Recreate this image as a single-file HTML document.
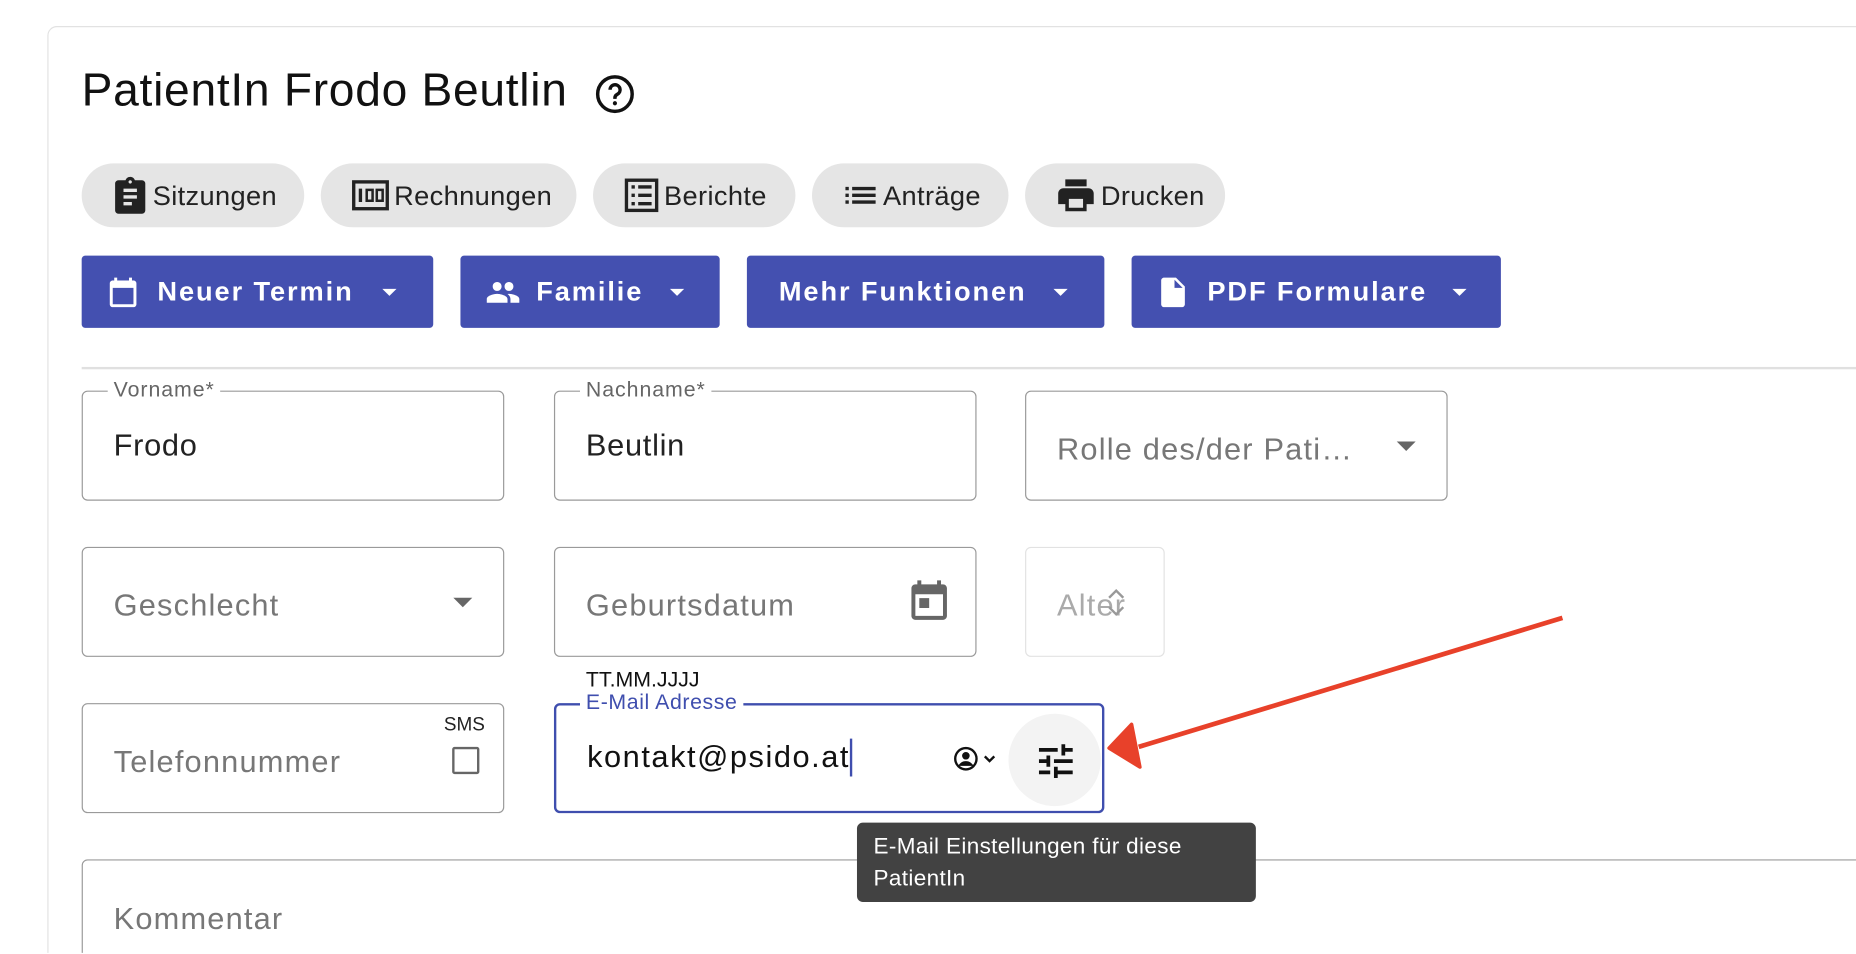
<!DOCTYPE html>
<html><head><meta charset="utf-8"><style>
html,body{margin:0;padding:0;background:#fff;width:1856px;height:954px;overflow:hidden;font-family:"Liberation Sans",Arial,sans-serif;}
#w{position:absolute;left:0;top:0;width:1568px;height:805px;overflow:hidden;transform:scale(1.18367);transform-origin:0 0;}
.a{position:absolute;}
.card{left:40px;top:22px;width:1600px;height:900px;border:1.5px solid #e2e2e2;border-radius:8px;}
.title{left:69px;top:55px;font-size:39px;color:#111;letter-spacing:0.6px;}
.chip{top:138px;height:54px;border-radius:27px;background:#e5e5e5;font-size:23px;color:#222;display:flex;align-items:center;box-sizing:border-box;padding-left:24px;letter-spacing:0.3px}
.chip svg{margin-right:2px}
.btn{top:216px;height:61px;background:#4450b0;border-radius:3px;color:#fff;font-weight:bold;font-size:23px;letter-spacing:1.6px;display:flex;align-items:center;box-sizing:border-box;}
.caret{width:0;height:0;border-left:6px solid transparent;border-right:6px solid transparent;border-top:6px solid #fff;position:absolute;}
.f{border:1.5px solid #9a9a9a;border-radius:5px;box-sizing:border-box;}
.lbl{position:absolute;top:-12px;background:#fff;padding:0 5px;font-size:18px;color:#666;letter-spacing:0.8px;}
.val{position:absolute;left:26px;font-size:26px;color:#222;letter-spacing:0.6px;white-space:nowrap}
.ph{position:absolute;left:26px;font-size:26px;color:#777;letter-spacing:1px;white-space:nowrap}
.gcaret{width:0;height:0;border-left:8px solid transparent;border-right:8px solid transparent;border-top:8px solid #666;position:absolute;}
</style></head><body><div id="w">
<div class="a card"></div>
<div class="a title">PatientIn Frodo Beutlin</div>
<svg class="a" style="left:502px;top:62px" width="35" height="35" viewBox="0 0 24 24"><circle cx="12" cy="12" r="10" fill="none" stroke="#111" stroke-width="2"/><path d="M9.2 9.5a2.9 2.9 0 1 1 4.2 2.6c-.9.5-1.4 1-1.4 2.1v.6" fill="none" stroke="#111" stroke-width="2"/><circle cx="12" cy="17.3" r="1.2" fill="#111"/></svg>

<div class="a chip" style="left:69px;width:188px"><svg width="34" height="34" viewBox="0 0 24 24"><path d="M19 3h-4.2C14.4 1.8 13.3 1 12 1s-2.4.8-2.8 2H5c-1.1 0-2 .9-2 2v16c0 1.1.9 2 2 2h14c1.1 0 2-.9 2-2V5c0-1.1-.9-2-2-2zm-7 0c.6 0 1 .4 1 1s-.4 1-1 1-1-.4-1-1 .4-1 1-1zM8 8h8v2H8zm0 4h8v2H8zm0 4h5v2H8z" fill="#222"/></svg>Sitzungen</div>
<div class="a chip" style="left:271px;width:216px"><svg width="36" height="34" viewBox="0 0 24 24"><rect x="2" y="4" width="20" height="16" fill="none" stroke="#222" stroke-width="2"/><path d="M5 8h2v8H5zM9 8h5v8H9zm1.5 1.5v5h2v-5zM15 8h5v8h-5zm1.5 1.5v5h2v-5z" fill="#222"/></svg>Rechnungen</div>
<div class="a chip" style="left:501px;width:171px"><svg width="34" height="34" viewBox="0 0 24 24"><rect x="3" y="3" width="18" height="18" fill="none" stroke="#222" stroke-width="2"/><path d="M6 6h2v2H6zm4 0h8v2h-8zM6 11h2v2H6zm4 0h8v2h-8zM6 16h2v2H6zm4 0h8v2h-8z" fill="#222"/></svg>Berichte</div>
<div class="a chip" style="left:686px;width:166px"><svg width="34" height="34" viewBox="0 0 24 24"><path d="M3 7h2v2H3zm4 0h14v2H7zM3 11h2v2H3zm4 0h14v2H7zM3 15h2v2H3zm4 0h14v2H7z" fill="#222"/></svg>Anträge</div>
<div class="a chip" style="left:866px;width:169px"><svg width="38" height="36" viewBox="0 0 24 24"><path d="M19 8H5c-1.7 0-3 1.3-3 3v6h4v4h12v-4h4v-6c0-1.7-1.3-3-3-3zm-3 11H8v-5h8v5zM18 3H6v4h12z" fill="#222"/></svg>Drucken</div>

<div class="a btn" style="left:69px;width:297px;padding-left:20px"><svg width="30" height="30" viewBox="0 0 24 24" style="margin-right:14px"><path d="M19 4h-1V2h-2v2H8V2H6v2H5c-1.1 0-2 .9-2 2v14c0 1.1.9 2 2 2h14c1.1 0 2-.9 2-2V6c0-1.1-.9-2-2-2zm0 16H5V9h14z" fill="#fff"/></svg>Neuer Termin<div class="caret" style="left:254px;top:28px"></div></div>
<div class="a btn" style="left:389px;width:219px;padding-left:20px"><svg width="32" height="30" viewBox="0 0 24 24" style="margin-right:12px"><path d="M16 11c1.7 0 3-1.3 3-3s-1.3-3-3-3-3 1.3-3 3 1.3 3 3 3zm-8 0c1.7 0 3-1.3 3-3S9.7 5 8 5 5 6.3 5 8s1.3 3 3 3zm0 2c-2.3 0-7 1.2-7 3.5V19h14v-2.5C15 14.2 10.3 13 8 13zm8 0c-.3 0-.6 0-1 .1 1.2.8 2 2 2 3.4V19h6v-2.5c0-2.3-4.700-3.5-7-3.5z" fill="#fff"/></svg>Familie<div class="caret" style="left:177px;top:28px"></div></div>
<div class="a btn" style="left:631px;width:302px;padding-left:27px">Mehr Funktionen<div class="caret" style="left:259px;top:28px"></div></div>
<div class="a btn" style="left:956px;width:312px;padding-left:20px"><svg width="30" height="30" viewBox="0 0 24 24" style="margin-right:14px"><path d="M14 2H6c-1.1 0-2 .9-2 2v16c0 1.1.9 2 2 2h12c1.1 0 2-.9 2-2V8zm-1 7V3.5L18.5 9z" fill="#fff"/></svg>PDF Formulare<div class="caret" style="left:271px;top:28px"></div></div>

<div class="a" style="left:69px;top:310px;width:1500px;height:1.5px;background:#e0e0e0"></div>

<div class="a f" style="left:69px;top:330px;width:357px;height:93px"><div class="lbl" style="left:21px">Vorname*</div><div class="val" style="top:30px">Frodo</div></div>
<div class="a f" style="left:468px;top:330px;width:357px;height:93px"><div class="lbl" style="left:21px">Nachname*</div><div class="val" style="top:30px">Beutlin</div></div>
<div class="a f" style="left:866px;top:330px;width:357px;height:93px"><div class="ph" style="top:33px">Rolle des/der Pati…</div><div class="gcaret" style="left:313px;top:42px"></div></div>

<div class="a f" style="left:69px;top:462px;width:357px;height:93px"><div class="ph" style="top:33px">Geschlecht</div><div class="gcaret" style="left:313px;top:42px"></div></div>
<div class="a f" style="left:468px;top:462px;width:357px;height:93px"><div class="ph" style="top:33px">Geburtsdatum</div><svg style="position:absolute;left:296px;top:24px" width="40" height="40" viewBox="0 0 24 24"><path d="M19 4h-1V2h-2v2H8V2H6v2H5c-1.1 0-2 .9-2 2v14c0 1.1.9 2 2 2h14c1.1 0 2-.9 2-2V6c0-1.1-.9-2-2-2zm0 16H5V9h14zM7 11h5v5H7z" fill="#666"/></svg></div>
<div class="a f" style="left:866px;top:462px;width:118px;height:93px;border-color:#e2e2e2"><div class="ph" style="top:33px;color:#aaa">Alter</div><svg style="position:absolute;left:64px;top:30px" width="24" height="32" viewBox="0 0 12 16"><path d="M3 6l3-3 3 3M3 10l3 3 3-3" fill="none" stroke="#999" stroke-width="1"/></svg></div>
<div class="a" style="left:495px;top:564px;font-size:18px;color:#111">TT.MM.JJJJ</div>

<div class="a f" style="left:69px;top:594px;width:357px;height:93px"><div class="ph" style="top:33px">Telefonnummer</div><div style="position:absolute;left:305px;top:9px;font-size:16px;color:#222">SMS</div><div style="position:absolute;left:312px;top:36px;width:19px;height:19px;border:2px solid #666;border-radius:2px"></div></div>
<div class="a" style="left:468px;top:594px;width:465px;height:93px;border:2.5px solid #3f4eae;border-radius:5px;box-sizing:border-box"><div class="lbl" style="left:20px;top:-13px;color:#3f4eae;letter-spacing:0.5px">E-Mail Adresse</div><div class="val" style="top:28px;color:#111;letter-spacing:1.3px">kontakt@psido.at</div><div style="position:absolute;left:248px;top:28px;width:2px;height:32px;background:#3f4eae"></div>
<svg style="position:absolute;left:334px;top:33px" width="42" height="24" viewBox="0 0 42 24"><circle cx="12" cy="12" r="9" fill="none" stroke="#111" stroke-width="2"/><circle cx="12" cy="9.5" r="3.2" fill="#111"/><path d="M5.5 18c2-3 4-4 6.5-4s4.5 1 6.5 4" fill="#111"/><path d="M28 10l4 4 4-4" fill="none" stroke="#111" stroke-width="2"/></svg>
<div style="position:absolute;left:382px;top:7px;width:78px;height:78px;border-radius:50%;background:#f3f3f3"></div>
<svg style="position:absolute;left:403px;top:28px" width="38" height="38" viewBox="0 0 24 24"><path d="M3 17v2h6v-2H3zM3 5v2h10V5H3zm10 16v-2h8v-2h-8v-2h-2v6h2zM7 9v2H3v2h4v2h2V9H7zm14 4v-2H11v2h10zm-6-4h2V7h4V5h-4V3h-2v6z" fill="#111"/></svg></div>

<div class="a f" style="left:69px;top:726px;width:1560px;height:120px"><div class="ph" style="top:34px">Kommentar</div></div>
<div class="a" style="left:724px;top:695px;width:337px;height:67px;background:#424242;border-radius:5px;color:#fff;font-size:19px;line-height:27px;padding:7px 14px;box-sizing:border-box;letter-spacing:0.3px">E-Mail Einstellungen für diese PatientIn</div>

<svg class="a" style="left:0;top:0" width="1568" height="805"><path d="M1320 522 L962 631" stroke="#e8412a" stroke-width="4" fill="none"/><path d="M937 632 L956 612 L963 648 Z" fill="#e8412a" stroke="#e8412a" stroke-width="3" stroke-linejoin="round"/></svg>
</div></body></html>
